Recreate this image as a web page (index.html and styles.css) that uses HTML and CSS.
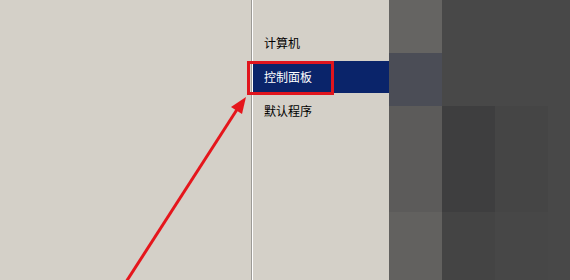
FILE: index.html
```html
<!DOCTYPE html>
<html lang="zh-CN">
<head>
    <meta charset="UTF-8">
    <title>开始菜单 - 控制面板</title>
    <link rel="stylesheet" href="styles.css">
</head>
<body>

<div class="screen">
    <div class="left-pane"></div>
    <div class="separator"></div>

    <ul class="menu">
        <li class="menu-item">计算机</li>
        <li class="menu-item selected">控制面板<span class="highlight-box"></span></li>
        <li class="menu-item">默认程序</li>
    </ul>

    <div class="mosaic">
        <div class="c1a"></div><div class="dk"></div><div class="dk"></div><div class="dk"></div>
        <div class="c1b"></div><div class="dk"></div><div class="dk"></div><div class="dk"></div>
        <div class="c1c"></div><div class="c2c"></div><div class="c3c"></div><div class="dk"></div>
        <div class="c1c"></div><div class="c2c"></div><div class="c3c"></div><div class="dk"></div>
        <div class="c1d"></div><div class="c2d"></div><div class="c3d"></div><div class="dk"></div>
    </div>

    <svg class="arrow" width="570" height="280" viewBox="0 0 570 280">
        <line x1="126" y1="282" x2="238" y2="108" stroke="#e5161c" stroke-width="3"/>
        <polygon points="246,97 242,114 231,107" fill="#e5161c"/>
    </svg>
</div>

</body>
</html>
```

FILE: styles.css
```css
body {
    margin: 0;
    padding: 0;
    background-color: #d4d0c8;
    font-family: "Noto Sans CJK SC", "Noto Sans", sans-serif;
    font-size: 12px;
    color: #000;
}
.screen {
    position: relative;
    display: flex;
    width: 570px;
    height: 280px;
    overflow: hidden;
}
.left-pane {
    width: 251px;
    background-color: #d4d0c8;
}
.separator {
    width: 1px;
    background-color: #9c9a96;
    border-right: 1px solid #ffffff;
}
.menu {
    list-style: none;
    margin: 0;
    padding: 27px 0 0 0;
    width: 136px;
}
.menu-item {
    position: relative;
    height: 32px;
    line-height: 32px;
    margin-bottom: 2px;
    padding-left: 11px;
}
.menu-item.selected {
    background-color: #0a246a;
    color: #fff;
}
.highlight-box {
    position: absolute;
    left: -6px;
    top: 0;
    width: 87px;
    height: 34px;
    box-sizing: border-box;
    border: 3px solid #e0151d;
}
.mosaic {
    flex: 1;
    display: grid;
    grid-template-columns: 53px 53px 53px 1fr;
    grid-template-rows: 53px 53px 53px 53px 1fr;
}
.dk { background-color: #484848; }
.c1a { background-color: #656462; }
.c1b { background-color: #4b4d56; }
.c1c { background-color: #5c5b5a; }
.c2c { background-color: #3e3e3f; }
.c3c { background-color: #454545; }
.c1d { background-color: #62615f; }
.c2d { background-color: #444444; }
.c3d { background-color: #474747; }
.arrow {
    position: absolute;
    left: 0;
    top: 0;
}
```
